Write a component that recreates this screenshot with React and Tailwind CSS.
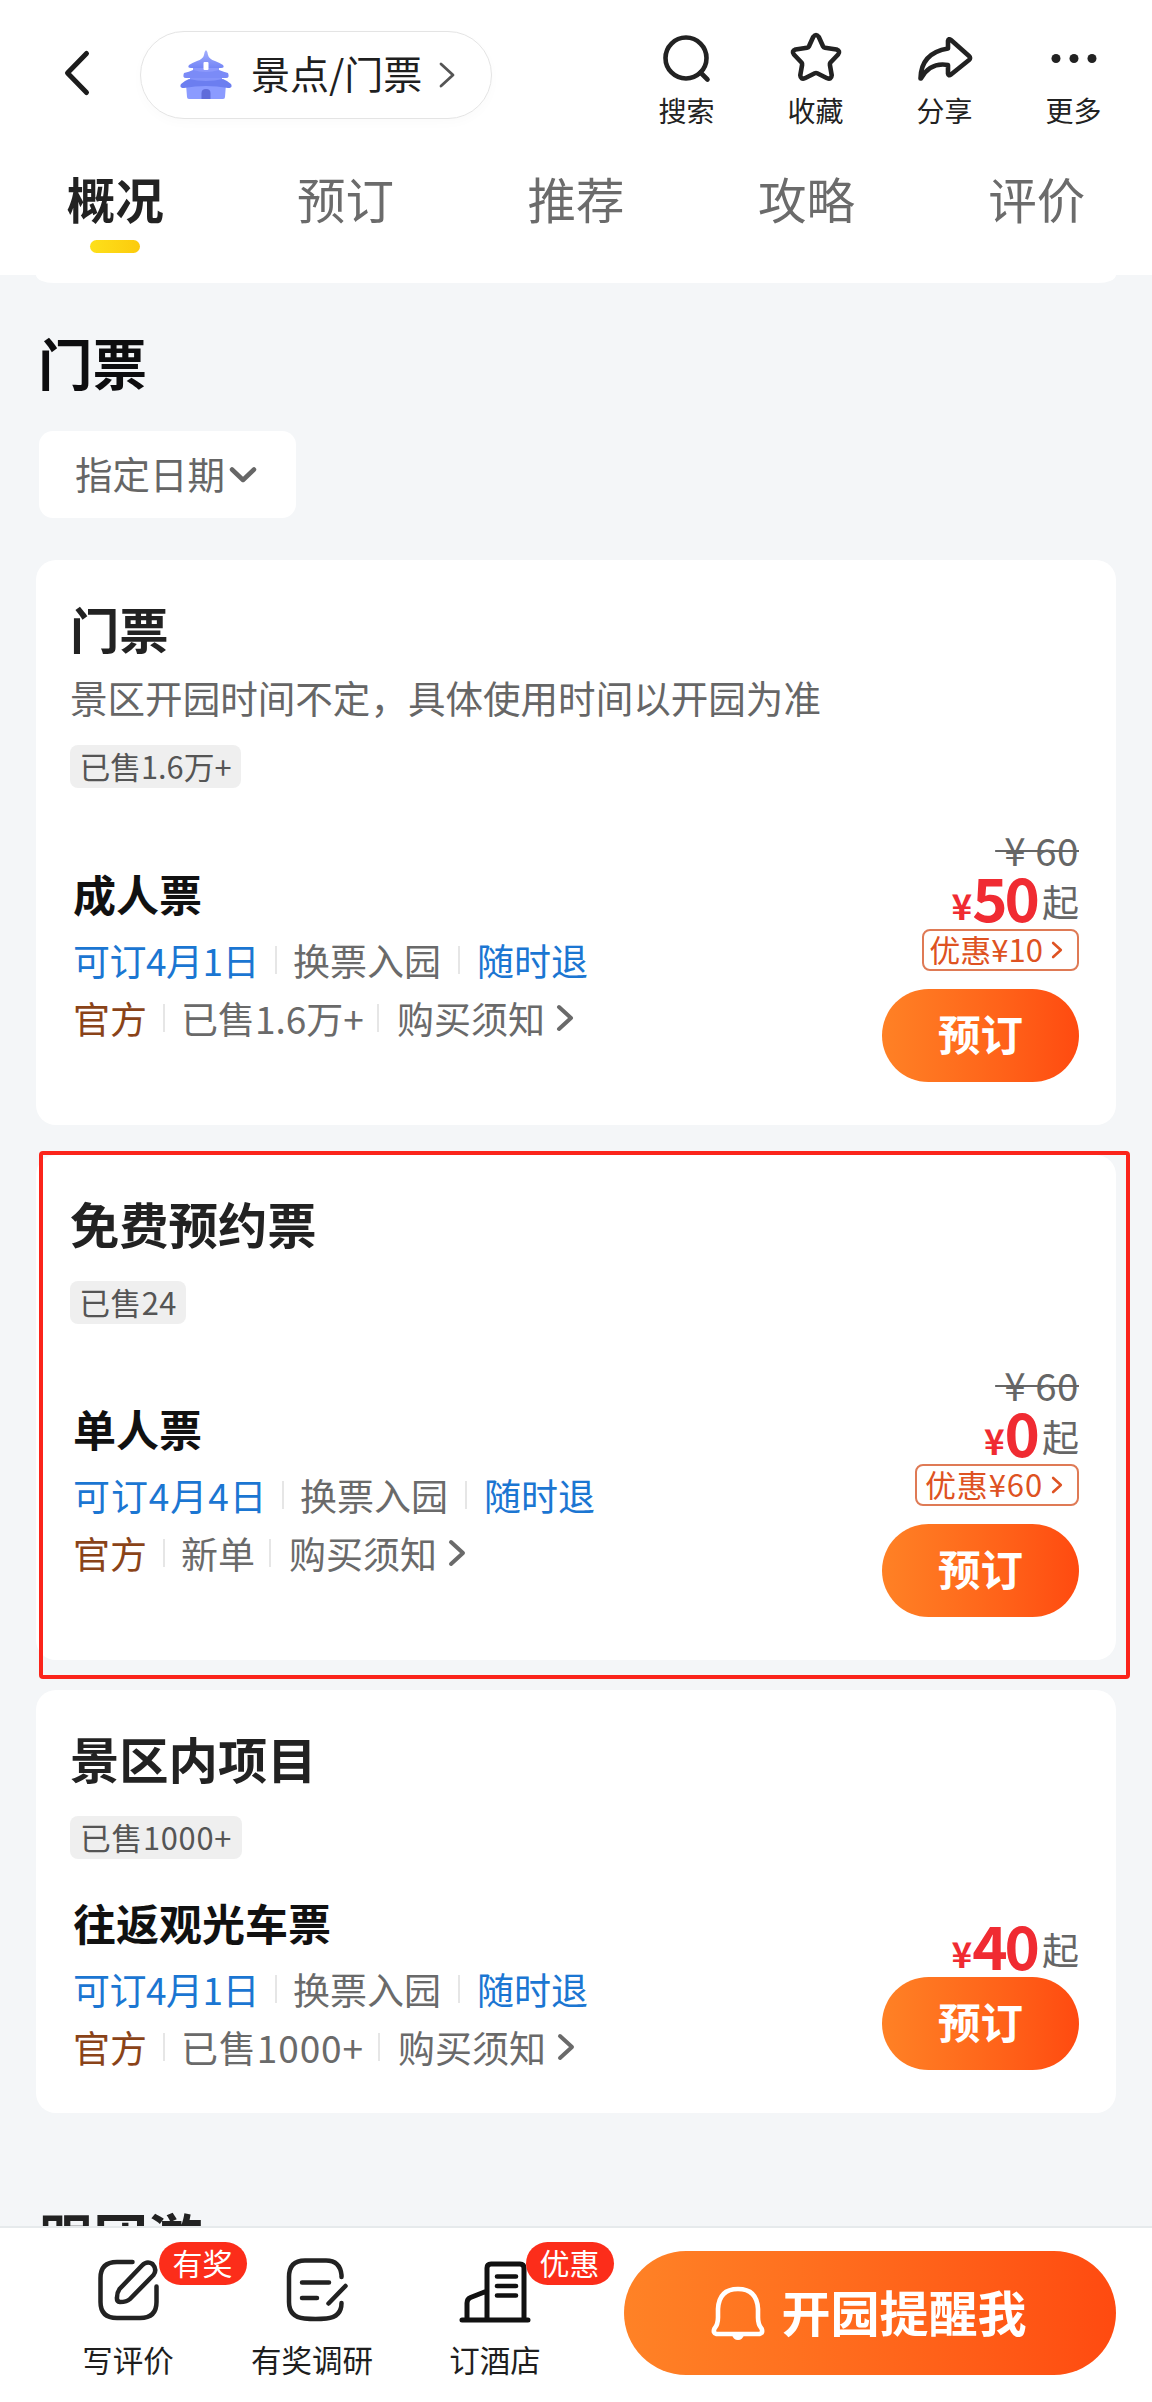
import clsx from "clsx";

const tabs = ["概况", "预订", "推荐", "攻略", "评价"];

const cards = [
  {
    title: "门票",
    desc: "景区开园时间不定，具体使用时间以开园为准",
    sold: "已售1.6万+",
    soldWidth: "w-[171px]",
    name: "成人票",
    date: "可订4月1日",
    dateWidth: "w-[188px] tracking-[-0.5px]",
    count: "已售1.6万+",
    countWidth: "w-[182px]",
    oldPrice: "60",
    price: "50",
    off: "10",
    offWidth: "w-[157px]",
    height: "h-[565px]",
    bottom: "pb-[78px]",
  },
  {
    title: "免费预约票",
    sold: "已售24",
    soldWidth: "w-[116px] tracking-[0.4px]",
    name: "单人票",
    date: "可订4月4日",
    dateWidth: "w-[195px] tracking-[0.9px]",
    count: "新单",
    countWidth: "w-[74px]",
    oldPrice: "60",
    price: "0",
    off: "60",
    offWidth: "w-[164px] tracking-[0.9px]",
    height: "h-[505px]",
    bottom: "pb-[78px]",
    marked: true,
  },
  {
    title: "景区内项目",
    sold: "已售1000+",
    soldWidth: "w-[172px] tracking-[0.7px]",
    name: "往返观光车票",
    date: "可订4月1日",
    dateWidth: "w-[188px] tracking-[-0.5px]",
    count: "已售1000+",
    countWidth: "w-[183px] tracking-[0.9px]",
    price: "40",
    height: "h-[423px]",
    bottom: "pb-[37px]",
  },
];

function Arrow({ className, width = 4 }) {
  return (
    <svg className={className} viewBox="0 0 18 28" fill="none" stroke="currentColor" strokeWidth={width} strokeLinecap="round" strokeLinejoin="round">
      <path d="M3 3l12 11L3 25" />
    </svg>
  );
}

function Pagoda() {
  return (
    <svg className="h-[50px] w-[52px]" viewBox="0 0 52 50">
      <defs>
        <linearGradient id="roof" x1="0" y1="0" x2="0" y2="1">
          <stop offset="0" stopColor="#a3affd" />
          <stop offset="1" stopColor="#7486f6" />
        </linearGradient>
      </defs>
      <path d="M6 34h40l-1 13q0 2-2 2H9q-2 0-2-2z" fill="#8b9bff" />
      <path d="M10 24h32v10H10z" fill="#8493fa" />
      <path d="M13 14h26v10H13z" fill="#8b98fb" />
      <path d="M26 0q2 2 2 5 1 4 7 6 5 2 8 4 2 3-2 3H11q-4 0-2-3 3-2 8-4 6-2 7-6 0-3 2-5z" fill="url(#roof)" />
      <path d="M13 20q13 4 26 0 5 2 9 3 2 5-2 5H6q-4 0-2-5 5-1 9-3z" fill="#7b8bf7" />
      <path d="M9 29q17 4 34 0 5 2 8 5 2 4-3 4-22-4-44 0-5 0-3-4 3-3 8-5z" fill="#6c7ef0" />
      <rect x="23.500" y="12" width="5" height="8" rx="1" fill="#fff" />
      <path d="M21.500 49v-6q0-4 4.500-4t4.500 4v6z" fill="#5f6cda" />
    </svg>
  );
}

function Action({ label, children }) {
  return (
    <div className="flex w-[129px] flex-col items-center">
      <svg className="h-[60px] w-[60px]" viewBox="0 0 60 60" fill="none" stroke="#222" strokeWidth="4.6" strokeLinecap="round" strokeLinejoin="round">
        {children}
      </svg>
      <span className="mt-[4px] text-[28px] leading-[36px] text-[#222]">{label}</span>
    </div>
  );
}

function Header() {
  return (
    <header className="h-[275px] shrink-0 bg-white">
      <div className="flex h-[150px]">
        <svg className="mt-[49px] ml-[62px] h-[48px] w-[30px]" viewBox="0 0 30 48" fill="none" stroke="#1c1c1c" strokeWidth="5" strokeLinecap="round" strokeLinejoin="round">
          <path d="M24.500 4.500L5.500 24l19 19.500" />
        </svg>
        <div className="mt-[31px] ml-[48px] flex h-[88px] w-[352px] items-center rounded-full border border-[#e4e4e4] pl-[39px] shadow-[0_4px_12px_rgba(0,0,0,0.02)]">
          <Pagoda />
          <span className="ml-[19px] w-[173px] pb-[7px] text-[39px] leading-[50px] whitespace-nowrap text-[#1f1f1f]">景点/门票</span>
          <Arrow className="ml-[14px] h-[28px] w-[18px] text-[#555]" width={2.8} />
        </div>
        <div className="mt-[28px] ml-auto flex pr-[14px]">
          <Action label="搜索">
            <circle cx="29" cy="30" r="20.500" />
            <path d="M43.500 44.500l7 7" />
          </Action>
          <Action label="收藏">
            <path d="M27.300 8.800Q30 5.300 32.700 8.800L37 18.300q.7 1.200 2 1.400l11.500 1.800q4.200 1.400 1.600 5L44.500 34.500q-.8 1-.6 2.300l1.800 10.400q-.4 4.500-4.600 3L31.200 45.300q-1.200-.6-2.400 0l-9.900 4.900q-4.200 1.500-4.600-3l1.800-10.400q.2-1.300-.6-2.300L7.900 26.500q-2.600-3.600 1.600-5L21 19.700q1.300-.2 2-1.400z" />
          </Action>
          <Action label="分享">
            <path d="M5.500 50.500Q6 25 33 20.500V13q.5-3 3-1L54 28q2.200 2 0 4L36 46.500q-2.500 2-3-1V37Q15 34 6 50.500z" />
          </Action>
          <Action label="更多">
            <g fill="#222" stroke="none">
              <circle cx="12" cy="30.500" r="4.500" />
              <circle cx="30" cy="30.500" r="4.500" />
              <circle cx="48" cy="30.500" r="4.500" />
            </g>
          </Action>
        </div>
      </div>
      <nav className="grid grid-cols-5">
        {tabs.map((tab, i) => (
          <div key={tab} className="flex flex-col items-center pt-[18px]">
            <span className={clsx("text-[48.500px] leading-[60px]", i === 0 ? "font-bold text-[#222]" : "text-[#6b6b6b]")}>{tab}</span>
            {i === 0 && <i className="mt-[12px] h-[13px] w-[50px] rounded-full bg-linear-to-r from-[#fde01a] to-[#fccb0c]" />}
          </div>
        ))}
      </nav>
    </header>
  );
}

function Divider() {
  return <i className="h-[28px] w-[2px] shrink-0 bg-[#e6e6e6]" />;
}

function BookButton() {
  return (
    <button className="h-[93px] w-[197px] rounded-full bg-linear-to-r from-[#ff8125] to-[#ff4a10] pb-[5px] text-[42.500px] font-bold text-white">
      预订
    </button>
  );
}

function TicketCard({ card }) {
  return (
    <section className={clsx("relative flex flex-col rounded-[20px] bg-white pt-[38px]", card.height)}>
      <h2 className="pl-[34px] text-[49.300px] leading-[60px] font-bold text-[#222]">{card.title}</h2>
      {card.desc && <p className="mt-[14px] pl-[34px] text-[37.550px] leading-[50px] text-[#666]">{card.desc}</p>}
      <span
        className={clsx(
          "ml-[34px] flex h-[43px] items-center justify-center rounded-[8px] bg-[#efefef] pb-[2px] text-[30.800px] leading-[40px] whitespace-nowrap text-[#555]",
          card.desc ? "mt-[23px]" : "mt-[28px]",
          card.soldWidth
        )}
      >
        {card.sold}
      </span>
      <div className="flex flex-1 items-end justify-between pr-[37px] pl-[37px]">
        <div className={clsx("text-[37px] leading-[58px] whitespace-nowrap text-[#6a6a6a]", card.bottom)}>
          <h3 className="text-[43px] leading-[75px] font-bold text-[#111]">{card.name}</h3>
          <div className="flex items-center">
            <span className={clsx("text-[#1b76d2]", card.dateWidth)}>{card.date}</span>
            <span className="flex w-[18px] justify-end pr-[2px]"><Divider /></span>
            <span className="w-[179px] pl-[14px]">换票入园</span>
            <Divider />
            <span className="pl-[17px] text-[#1b76d2]">随时退</span>
          </div>
          <div className="flex items-center">
            <span className="w-[90px] text-[#8a4318]">官方</span>
            <Divider />
            <span className={clsx("ml-[16px]", card.countWidth)}>{card.count}</span>
            <span className="flex w-[16px] justify-end"><Divider /></span>
            <span className="ml-[18px]">购买须知</span>
            <Arrow className="ml-[11px] h-[28px] w-[18px]" />
          </div>
        </div>
        <div className="flex flex-col items-end pb-[43px]">
          {card.oldPrice && (
            <span className="flex h-[36px] items-center pl-[8px] text-[38.500px] leading-[36px] tracking-[0.5px] whitespace-pre text-[#666] line-through decoration-2">
              {" ¥ " + card.oldPrice}
            </span>
          )}
          <div className="mb-[5px] flex h-[57px] items-center leading-[57px]">
            <b className="pt-[18px] text-[35px] leading-[40px] text-[#f02b32]">¥</b>
            <b className="text-[60px] tracking-[-3px] text-[#f02b32]">{card.price}</b>
            <span className="ml-[5px] pt-[10px] text-[37px] leading-[40px] text-[#666]">起</span>
          </div>
          {card.off && (
            <span
              className={clsx(
                "mb-[18px] flex h-[42px] items-center justify-end rounded-[8px] border-2 border-[#df7a55] pr-[14px] pb-[2px] text-[31px] leading-[36px] whitespace-nowrap text-[#de5222]",
                card.offWidth
              )}
            >
              优惠¥{card.off}
              <Arrow className="mt-[1px] ml-[8px] h-[18px] w-[12px]" />
            </span>
          )}
          <BookButton />
        </div>
      </div>
      {card.marked && <div className="absolute -top-[4px] left-[3px] h-[528px] w-[1091px] rounded-[4px] border-4 border-[#fb241b]" />}
    </section>
  );
}

function FooterItem({ label, badge, className, children }) {
  return (
    <div className={clsx("relative flex flex-col items-center pt-[27px]", className)}>
      <svg className="h-[72px] w-[80px]" viewBox="0 0 80 72" fill="none" stroke="#222" strokeWidth="4.500" strokeLinecap="round" strokeLinejoin="round">
        {children}
      </svg>
      <span className="mt-[12px] text-[30.500px] leading-[40px] whitespace-nowrap text-[#1e1e1e]">{label}</span>
      {badge && (
        <span className="absolute top-[14px] left-1/2 ml-[31px] flex h-[43px] w-[88px] items-center justify-center rounded-full bg-[#fc2d1a] pr-[1px] pb-[4px] text-[30px] leading-[38px] whitespace-nowrap text-white">
          {badge}
        </span>
      )}
    </div>
  );
}

function Footer() {
  return (
    <footer className="flex h-[176px] shrink-0 border-t-2 border-[#e6eaec] bg-white pl-[67px]">
      <FooterItem label="写评价" badge="有奖" className="w-[122px]">
        <path d="M44.500 7H29Q12.500 7 12.500 23v24q0 16 16.500 16h23q16.500 0 16.500-16V31.500" />
        <path d="M54 10.500q5-5 10.500-1.500 5 5.500 1 11L42 44q-3 3-10 3-3.500-.5-3-4.500 0-5 2.500-8.500z" />
      </FooterItem>
      <FooterItem label="有奖调研" className="ml-[52px] w-[142px]">
        <path d="M69.500 22V20Q68 5.500 54 5.500H33Q17 5.500 17 22v25q0 15 15.500 16.500 11 1 22 0Q69.500 62 69.500 48M30 27.500h27M30 43h15M73.500 31L56.500 48.500" />
      </FooterItem>
      <FooterItem label="订酒店" badge="优惠" className="ml-[51px] w-[122px]">
        <g strokeWidth="5" stroke="#111">
          <path d="M7 65h66M32 65V13q0-4 4-4h29q4 0 4 4v51M12 65V48q0-4 3.500-5.500L32 36" />
          <path d="M42 21.500h19M42 31h19M42 40.500h19" strokeWidth="4.600" />
        </g>
      </FooterItem>
      <button className="mt-[23px] ml-[68px] flex h-[124px] w-[492px] items-center justify-center rounded-full bg-linear-to-r from-[#ff8226] to-[#ff4a10] pr-[2px] text-[49px] font-bold text-white">
        <svg className="h-[56px] w-[54px]" viewBox="0 0 54 56" fill="none" stroke="#fff" strokeWidth="4.600" strokeLinejoin="round">
          <path d="M5.500 49q-4-1-2-5.500 3.500-4 3.500-11V24Q8 4 27 4t20 20v8.500q0 7 3.500 11 2 4.500-2 5.500z" />
          <path d="M21 50h12q-1.500 5-6 5t-6-5z" fill="#fff" stroke="none" />
        </svg>
        <span className="ml-[16px] pb-[4px] leading-[60px]">开园提醒我</span>
      </button>
    </footer>
  );
}

export default function App() {
  return (
    <div className="flex h-[2402px] w-[1152px] flex-col overflow-hidden bg-[#f4f6f8] font-['Noto_Sans_CJK_SC','Noto_Sans',sans-serif]">
      <Header />
      <main className="flex min-h-0 flex-1 flex-col overflow-hidden px-[36px]">
        <div className="h-[8px] shrink-0 rounded-b-[18px_8px] bg-white" />
        <h1 className="mt-[46px] pl-[2px] text-[54.500px] leading-[66px] font-bold text-[#0d0d0f]">门票</h1>
        <div className="mt-[36px] ml-[3px] flex h-[87px] w-[257px] shrink-0 items-center rounded-[14px] bg-white pl-[36px] text-[37.500px] text-[#666]">
          <span className="pb-[2px]">指定日期</span>
          <svg className="ml-[4px] h-[18px] w-[28px]" viewBox="0 0 28 18" fill="none" stroke="currentColor" strokeWidth="4.500" strokeLinecap="round" strokeLinejoin="round">
            <path d="M3 3.500l11 10.500L25 3.500" />
          </svg>
        </div>
        <div className="mt-[42px] flex shrink-0 flex-col gap-[30px]">
          {cards.map((card) => (
            <TicketCard key={card.title} card={card} />
          ))}
        </div>
        <h1 className="mt-[91px] shrink-0 pl-[3px] text-[54.500px] leading-[66px] font-bold text-[#222]">跟团游</h1>
      </main>
      <Footer />
    </div>
  );
}
